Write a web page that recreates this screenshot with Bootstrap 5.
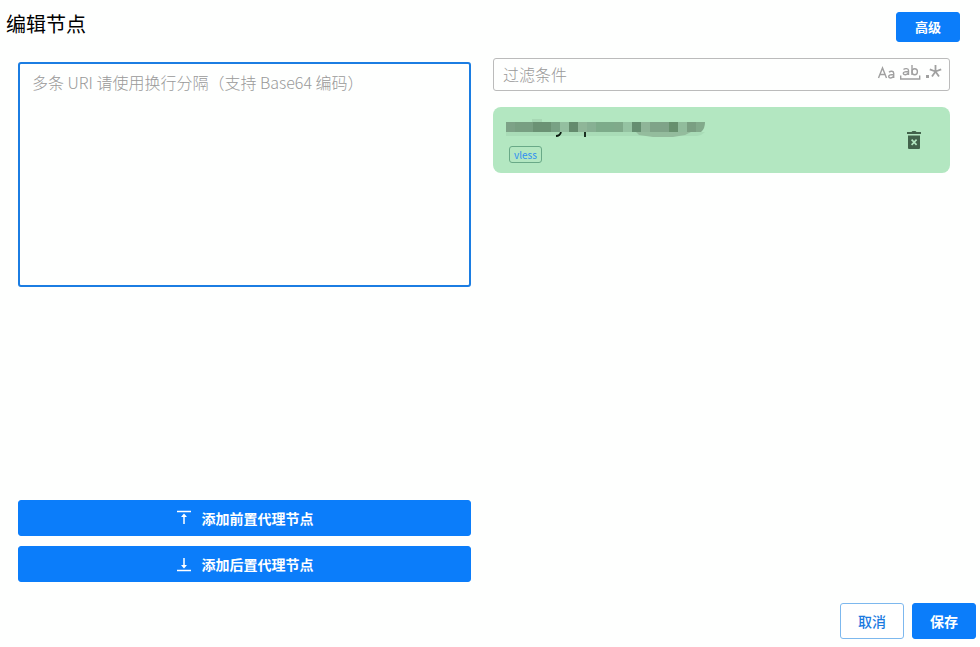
<!DOCTYPE html>
<html lang="zh-CN">
<head>
<meta charset="utf-8">
<meta name="viewport" content="width=device-width, initial-scale=1">
<title>编辑节点</title>
<link href="https://cdn.jsdelivr.net/npm/bootstrap@5.3.0/dist/css/bootstrap.min.css" rel="stylesheet">
<style>
  body { font-family: "Noto Sans CJK SC", "Noto Sans", sans-serif; background: #fefffe; color: #000; font-size: 14px; line-height: 20px; }
  .page-header { padding: 12px 20px 16px 6px; }
  .page-title { font-size: 20px; line-height: 24px; }
  .btn { --bs-btn-font-size: 14px; --bs-btn-line-height: 20px; --bs-btn-border-radius: 3px; min-width: 64px; }
  .btn-primary { --bs-btn-bg: #0b7dfa; --bs-btn-border-color: #0b7dfa; --bs-btn-font-weight: 700; }
  .btn-outline-primary { --bs-btn-color: #1a7ae0; --bs-btn-border-color: #7db8ee; --bs-btn-bg: #fff; --bs-btn-font-weight: 500; }
  .btn-tall { --bs-btn-padding-y: 7px; }
  .btn-short { --bs-btn-padding-y: 4px; --bs-btn-font-size: 13px; }
  .editor-area { padding: 0 30px 0 18px; }
  .uri-column { padding: 4px 13px 0 0; }
  .list-column { padding-left: 9px; }
  .uri-box { height: 225px; border: 2px solid #1b7de2; border-radius: 3px; padding: 6px 12px; font-size: 16px; line-height: 24px; resize: none; background: #fefffe; }
  .uri-box:focus { box-shadow: none; border-color: #1b7de2; }
  .uri-box::placeholder, .filter-input::placeholder { color: #999; font-weight: 300; opacity: 1; }
  .filter-box { border: 1px solid #bbb; border-radius: 3px; height: 33px; padding: 0 6px 2px 9px; }
  .filter-input { font-size: 16px; line-height: 24px; min-width: 0; outline: 0; background: transparent; }
  .tool { color: #a0a0a0; }
  .tool svg, .delete svg { display: block; }
  .node-item { background: #b3e7c1; border-radius: 8px; padding: 12px 26px 12px 13px; height: 66px; }
  .node-tag { border: 1px solid #69a987; border-radius: 3px; color: #2f8ff0; font-size: 10px; line-height: 15px; padding: 0 4px; margin-left: 3px; }
  .delete { color: #42634b; }
  .add-buttons { gap: 10px; }
  .add-buttons .btn { display: flex; justify-content: center; align-items: center; }
  .add-buttons svg { margin-right: 10px; }
  .actions { padding: 21px 4px 8px; }
</style>
</head>
<body>
<main class="d-flex flex-column min-vh-100">
  <header class="page-header d-flex justify-content-between align-items-start">
    <h1 class="page-title fw-normal m-0">编辑节点</h1>
    <button type="button" class="btn btn-primary btn-short" id="advanced">高级</button>
  </header>
  <div class="editor-area row g-0 flex-grow-1">
    <section class="uri-column col-6 d-flex flex-column justify-content-between">
      <textarea class="uri-box form-control" aria-label="节点 URI" placeholder="多条 URI 请使用换行分隔（支持 Base64 编码）"></textarea>
      <div class="add-buttons d-flex flex-column">
        <button type="button" class="btn btn-primary btn-tall"><svg width="16" height="16" viewBox="0 0 16 16" fill="none" stroke="#fff" stroke-width="1.5" aria-hidden="true"><path d="M1 1.5h14M8 14V5"/><path d="M5 7l3-3.5L11 7z" fill="#fff" stroke="none"/></svg>添加前置代理节点</button>
        <button type="button" class="btn btn-primary btn-tall"><svg width="16" height="16" viewBox="0 0 16 16" fill="none" stroke="#fff" stroke-width="1.5" aria-hidden="true"><path d="M1 14.5h14M8 2v9"/><path d="M5 9l3 3.500L11 9z" fill="#fff" stroke="none"/></svg>添加后置代理节点</button>
      </div>
    </section>
    <section class="list-column col-6">
      <div class="filter-box d-flex align-items-center">
        <input class="filter-input border-0 p-0 flex-grow-1" type="text" aria-label="过滤条件" placeholder="过滤条件">
        <div class="d-flex align-items-center gap-1 pb-1">
          <button type="button" class="tool border-0 bg-transparent p-0" aria-label="区分大小写"><svg width="18" height="18" viewBox="0 0 18 18" fill="none" stroke="currentColor" stroke-width="1.400"><path d="M1.500 15L5.500 5l4 10M2.800 11.500h5.400M12 9.300c1.500-1.500 4.700-1.500 4.700 1V15M16.700 11.500c-3.800 0-5 .5-5 2 0 2 3.800 2 5-.5"/></svg></button>
          <button type="button" class="tool border-0 bg-transparent p-0" aria-label="全词匹配"><svg width="22" height="18" viewBox="0 0 22 18" fill="none" stroke="currentColor" stroke-width="1.400"><path d="M1.700 12.500v3.500h19v-3.500M4.500 6.500c1.500-1.300 5-1.300 5 1V12M9.500 8.500c-4 0-5.200.5-5.200 1.800 0 2 4 2 5.200-.5M13 2v10"/><ellipse cx="15.700" cy="8.800" rx="2.700" ry="3"/></svg></button>
          <button type="button" class="tool border-0 bg-transparent p-0" aria-label="正则表达式"><svg width="18" height="18" viewBox="0 0 18 18" fill="none" stroke="currentColor" stroke-width="1.800"><rect x="1" y="12" width="3" height="3" fill="currentColor" stroke="none"/><path d="M10.500 2v6.500M4.800 6.300l5.700 2.200M16.200 6.300l-5.700 2.200M7 13.500l3.500-5 3.500 5"/></svg></button>
        </div>
      </div>
      <div class="node-item d-flex justify-content-between align-items-center mt-3">
        <div class="d-flex flex-column align-items-start align-self-start">
          <svg width="200" height="27" viewBox="0 0 200 27" role="img" aria-label="节点名称已遮盖">
            <path d="M26 0h10v4H26z" fill="#a7d8b4"/>
            <path d="M0 13h199l-4 3-4 1H0z" fill="#a9dcb7"/>
            <path d="M130 13h55l-6 3-12 2h-20l-14-2z" fill="#94bc9d"/>
            <path d="M55 13q-1 4-5 4M79 13v5" fill="none" stroke="#0c1c10" stroke-width="1.800"/>
            <path d="M0 3h9v10H0z" fill="#7da287"/><path d="M9 3h18v10H9z" fill="#789f82"/><path d="M27 3h18v10H27z" fill="#6b9274"/><path d="M45 3h9v10h-9z" fill="#78a184"/><path d="M54 3h9v10h-9z" fill="#94bfa0"/><path d="M63 3h9v10h-9z" fill="#648b6d"/><path d="M72 3h9v10h-9z" fill="#8fb698"/><path d="M81 3h9v10h-9z" fill="#87b093"/><path d="M90 3h18v10H90z" fill="#7dab8a"/><path d="M108 3h9v10h-9z" fill="#7faa8a"/><path d="M117 3h9v10h-9z" fill="#95c3a2"/><path d="M126 3h9v10h-9z" fill="#658e70"/><path d="M135 3h9v10h-9z" fill="#8fb598"/><path d="M144 3h19v10h-19z" fill="#7fa388"/><path d="M163 3h9v10h-9z" fill="#67906e"/><path d="M172 3h9v10h-9z" fill="#91bc9c"/><path d="M181 3h9v10h-9z" fill="#7a9f82"/><path d="M190 3h9q0 7-4 10h-5z" fill="#82aa8b"/>
          </svg>
          <span class="node-tag">vless</span>
        </div>
        <button type="button" class="delete border-0 bg-transparent p-0" aria-label="删除节点"><svg width="20" height="20" viewBox="0 0 20 20"><path fill="currentColor" fill-rule="evenodd" d="M3 2h4.500l1-1h3l1 1H17v2H3zM4 5.500h12V18q0 1-1 1H5q-1 0-1-1zM7 10.200l2 2-2 2L8.200 15.400l1.900-1.900 1.900 1.900 1.200-1.200-2-2 2-2L12 9l-1.900 1.900L8.200 9z"/></svg></button>
      </div>
    </section>
  </div>
  <footer class="actions d-flex justify-content-end gap-2">
    <button type="button" class="btn btn-outline-primary btn-tall">取消</button>
    <button type="button" class="btn btn-primary btn-tall">保存</button>
  </footer>
</main>
<script src="https://cdn.jsdelivr.net/npm/bootstrap@5.3.0/dist/js/bootstrap.bundle.min.js"></script>
</body>
</html>
